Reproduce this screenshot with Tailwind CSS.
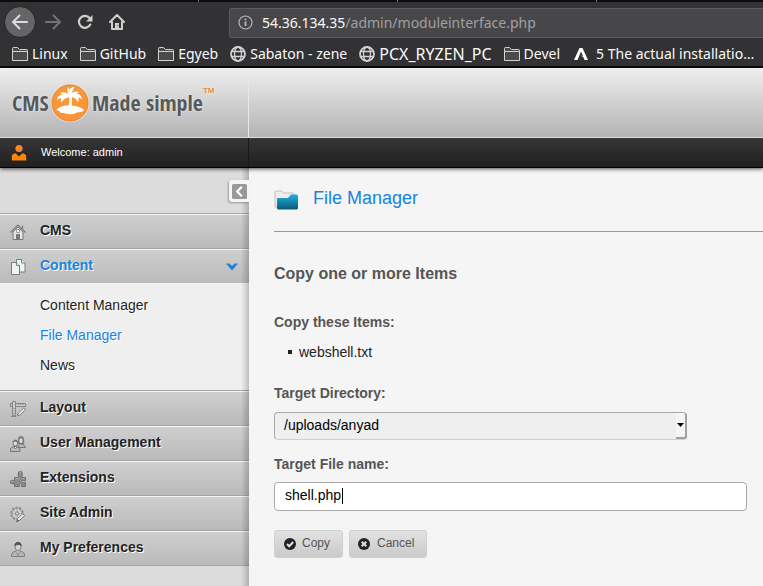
<!DOCTYPE html>
<html lang="en">
<head>
<meta charset="utf-8">
<meta name="viewport" content="width=device-width, initial-scale=1">
<title>File Manager - CMS Made Simple</title>
<script src="https://cdn.jsdelivr.net/npm/@tailwindcss/browser@4"></script>
</head>
<body class="flex min-h-screen flex-col overflow-x-hidden bg-[#f5f5f5] font-['Liberation_Sans',Arial,sans-serif] text-sm text-[#232323]">

<!-- Browser chrome -->
<div class="border-b-2 border-[#0c0c0d] bg-[#323234] font-['Noto_Sans',sans-serif] text-[#f9f9fa]">
  <div class="flex h-[2px] bg-[#0c0c0d]"><div class="ml-[198px] w-px bg-[#77777a]"></div><div class="ml-[198px] w-px bg-[#77777a]"></div><div class="ml-[198px] w-px bg-[#77777a]"></div></div>
  <div class="flex h-10 items-center">
    <button aria-label="Back" class="ml-1 grid size-8 shrink-0 place-items-center rounded-full border border-[#252526] bg-[#656567]">
      <svg class="size-4" viewBox="0 0 16 16" fill="none" stroke="#dcdcdd" stroke-width="2" stroke-linecap="round" stroke-linejoin="round"><path d="M15 8H1.500M7.500 1.500 1 8l6.500 6.500"/></svg>
    </button>
    <button aria-label="Forward" class="ml-[9px] grid size-4 shrink-0 place-items-center">
      <svg class="size-4" viewBox="0 0 16 16" fill="none" stroke="#737375" stroke-width="2" stroke-linecap="round" stroke-linejoin="round"><path d="M1 8h13.500M8.500 1.500 15 8l-6.500 6.500"/></svg>
    </button>
    <button aria-label="Reload" class="ml-4 grid size-4 shrink-0 place-items-center">
      <svg class="size-4" viewBox="0 0 16 16" fill="none" stroke="#cfcfd0" stroke-width="2.200" stroke-linecap="round"><path d="M13.300 10.600A6 6 0 1 1 12.600 4"/><path d="M15.500 1v6.500H9z" fill="#cfcfd0" stroke="none"/></svg>
    </button>
    <button aria-label="Home" class="ml-4 grid size-4 shrink-0 place-items-center">
      <svg class="size-4" viewBox="0 0 16 16" fill="none" stroke="#cfcfd0" stroke-width="2" stroke-linejoin="round" stroke-linecap="round"><path d="M1 8 8 1l7 7M3 8v7h10V8"/><path d="M6 15V9h4v6z" fill="#cfcfd0" stroke="none"/><path d="M9 11.500h.1" stroke="#323234" stroke-width="1"/></svg>
    </button>
    <div class="ml-[104px] mt-px flex h-[30px] min-w-0 flex-1 items-center rounded-l-[3px] border border-r-0 border-[#5c5c5e] bg-[#474749] pl-2">
      <svg class="size-[15px] shrink-0" viewBox="0 0 15 15" fill="none" stroke="#b9b9ba"><circle cx="7.500" cy="7.500" r="6.500" stroke-width="1.200"/><path d="M7.500 6.500V11" stroke-width="1.800"/><path d="M7.500 3.500v1.800" stroke-width="1.800"/></svg>
      <div class="ml-[9px] truncate text-[14px] text-[#a0a0a2]"><span class="text-[#f9f9fa]">54.36.134.35</span>/admin/moduleinterface.php</div>
    </div>
  </div>
  <nav aria-label="Bookmarks" class="flex h-6 items-center gap-3 overflow-hidden whitespace-nowrap pl-3 text-[14px]">
    <a href="#" class="flex shrink-0 items-center gap-1"><svg class="h-[14px] w-4" viewBox="0 0 16 14" fill="#4a4a4b" stroke="#d2d2d3"><path d="M.500 13.500V1.500q0-1 1-1h4l2 2h7q1 0 1 1v10zM.500 4.500h15"/></svg>Linux</a>
    <a href="#" class="flex shrink-0 items-center gap-1"><svg class="h-[14px] w-4" viewBox="0 0 16 14" fill="#4a4a4b" stroke="#d2d2d3"><path d="M.500 13.500V1.500q0-1 1-1h4l2 2h7q1 0 1 1v10zM.500 4.500h15"/></svg>GitHub</a>
    <a href="#" class="flex shrink-0 items-center gap-1"><svg class="h-[14px] w-4" viewBox="0 0 16 14" fill="#4a4a4b" stroke="#d2d2d3"><path d="M.500 13.500V1.500q0-1 1-1h4l2 2h7q1 0 1 1v10zM.500 4.500h15"/></svg>Egyeb</a>
    <a href="#" class="flex shrink-0 items-center gap-1"><svg class="size-4" viewBox="0 0 16 16" fill="none" stroke="#d2d2d3" stroke-width="1.300"><circle cx="8" cy="8" r="7" stroke-width="1.800"/><ellipse cx="8" cy="8" rx="3.500" ry="7"/><path d="M1 5.500h14M1 10.500h14"/></svg>Sabaton - zene</a>
    <a href="#" class="flex shrink-0 items-center gap-1 text-base leading-5"><svg class="size-4" viewBox="0 0 16 16" fill="none" stroke="#d2d2d3" stroke-width="1.300"><circle cx="8" cy="8" r="7" stroke-width="1.800"/><ellipse cx="8" cy="8" rx="3.500" ry="7"/><path d="M1 5.500h14M1 10.500h14"/></svg>PCX_RYZEN_PC</a>
    <a href="#" class="flex shrink-0 items-center gap-1"><svg class="h-[14px] w-4" viewBox="0 0 16 14" fill="#4a4a4b" stroke="#d2d2d3"><path d="M.500 13.500V1.500q0-1 1-1h4l2 2h7q1 0 1 1v10zM.500 4.500h15"/></svg>Devel</a>
    <a href="#" class="flex shrink-0 items-center gap-2 pl-[2px]"><svg class="h-3 w-[14px]" viewBox="0 0 14 12" fill="#fff"><path d="M5.500 0h3L14 12h-3.500L9.300 9 6.500 7.500 9 8 7 3.500 3.500 12H0z"/></svg>5 The actual installatio…</a>
  </nav>
</div>

<!-- Page header -->
<header class="relative z-10 shadow-[0_1px_4px_rgba(0,0,0,0.7)]">
  <div class="flex h-[70px] border-b border-[#dedede] bg-linear-to-b from-[#efefef] to-[#b4b4b4]">
    <a href="#" aria-label="CMS Made Simple" class="flex w-[249px] shrink-0 items-center border-r border-[#e8e8e8] pl-3 font-['Open_Sans_Condensed','Roboto_Condensed',sans-serif] font-bold whitespace-nowrap text-[#58595b] [text-shadow:0_0_2px_#fff]">
      <span class="w-[38px] text-[22px]">CMS</span>
      <svg class="size-10 shrink-0" viewBox="0 0 40 40"><circle cx="20" cy="20" r="19.300" fill="#e9e2da"/><circle cx="20" cy="20" r="18" fill="#f7973a" stroke="#e7812b"/><g fill="#fff"><path d="M6.500 26.500c3-3 8-4.200 12.300-4.200.5-3.600.7-6.300.2-9.300l2.600-.4c.6 3.200.4 6.500.3 9.800 5 .2 9.500 2 12.300 4.600-1.500 2-4.500 2.300-7.500 2.500-2.500 2-9 2.300-12.500.5-2.300.4-5-.2-4.500-1.700-1.300-.2-2.500-.8-3.200-1.800z"/><path d="M20 13c-2.500-3.500-7-5-10.500-2.500 2-.2 2.800.2 3.500.7-3 .3-6 2.600-6 6.300 1.500-2 3-2.500 4.200-2.600-.5 1.500-.4 3 .3 4.600C13 16.500 16 14.500 20 14z"/><path d="M19.500 13c-2-3-3-6.500-1.500-9 .5 1.400 1 2 1.600 2.500 1-2 3-2.800 5-2.500-1.500 2-2.600 5-3.300 9z"/><path d="M20 12.500c2-3.500 6-5.300 9.500-3-1.600 0-2.400.4-3 1 3.500.3 5.500 3 5.200 6.300-1-1.500-2-2.200-3.200-2.300.5 2 .2 3.500-.8 5-.7-3.500-3-5.300-7.200-5.800z"/></g></svg>
      <span class="ml-[2px] text-[22px]">Made simple</span>
      <sup class="-top-3 font-['Liberation_Sans',sans-serif] text-[8px] text-[#e38a3c]">TM</sup>
    </a>
  </div>
  <div class="flex h-[30px] border-b border-black bg-linear-to-b from-[#363636] to-[#202020]">
    <div class="flex w-[249px] shrink-0 items-center border-r border-[#191919] pl-[11px] text-[11px] text-white">
      <svg class="h-[18px] w-4" viewBox="0 0 16 18"><circle cx="8" cy="4.500" r="3.600" fill="#f58a2c"/><path d="M.800 16.500V12.500Q1 9.800 4.500 9.300L8 12.500l3.500-3.200q3.500.5 3.700 3.200v4z" fill="#ff8408"/></svg>
      <span class="ml-[14px]">Welcome: admin</span>
    </div>
  </div>
</header>

<div class="flex flex-1">
  <!-- Sidebar -->
  <aside class="relative w-[249px] shrink-0 bg-[#dcdcdc]">
    <div class="flex h-[46px] justify-end border-b border-[#a5a5a5] pt-3">
      <button aria-label="Collapse menu" class="relative z-10 grid h-[22px] w-5 place-items-center rounded-l-[3px] bg-[#f5f5f5] shadow-[-1px_1px_2px_rgba(0,0,0,0.3)]">
        <svg class="size-[15px]" viewBox="0 0 15 15"><rect width="15" height="15" rx="1.500" fill="#999"/><path d="M9.800 2.800 5.200 7.500l4.600 4.700" fill="none" stroke="#fff" stroke-width="2.200"/></svg>
      </button>
    </div>
    <nav aria-label="Main menu" class="font-bold [text-shadow:1px_1px_0_#fff]">
      <a href="#" class="flex h-[35px] items-center border-t border-b border-t-[#f5f5f5] border-b-[#a5a5a5] bg-linear-to-b from-[#cfcfcf] to-[#bababa] pl-[10px] pb-[3px]">
        <svg class="mt-1 size-4" viewBox="0 0 16 16" fill="none" stroke="#777"><path d="M3 8v7.500h10V8L8 3z" fill="#e4e4e4"/><path d="M.500 8.500 8 1l7.500 7.500M12.500 5V1.500" stroke-width="1.200"/><path d="M6.500 15.500v-5h3v5z" fill="#777"/><path d="M6.500 5.500h3v3h-3z" fill="#fff" stroke="#999"/></svg>
        <span class="ml-[14px]">CMS</span>
      </a>
      <a href="#" class="flex h-[34px] items-center border-t border-[#f5f5f5] bg-linear-to-b from-[#cfcfcf] to-[#bababa] pl-[10px] pb-1 text-[#1983de]">
        <svg class="mt-1 size-4" viewBox="0 0 16 16" stroke="#72807e" fill="#edf4f3"><path d="M6.500.500h5l3.500 3.500v9H6.500z"/><path d="M11.500.500V4H15" fill="#fff"/><path d="M1.500 3.500h5l3 3v9h-8z"/><path d="M6.500 3.500v3h3" fill="#fff"/></svg>
        <span class="ml-[14px] flex-1">Content</span>
        <svg class="mt-1 mr-[11px] h-2 w-3" viewBox="0 0 12 8" fill="#1983de"><path d="M0 .500h3.500L6 3l2.500-2.500H12L6 7.500z"/></svg>
      </a>
      <div class="flex h-[108px] flex-col border-b border-[#a5a5a5] bg-[#efefef] pt-[7px] pl-10 font-normal leading-[30px]">
        <a href="#">Content Manager</a>
        <a href="#" class="text-[#1983de]">File Manager</a>
        <a href="#">News</a>
      </div>
      <a href="#" class="flex h-[35px] items-center border-t border-b border-t-[#f5f5f5] border-b-[#a5a5a5] bg-linear-to-b from-[#cfcfcf] to-[#bababa] pl-[10px] pb-[3px]">
        <svg class="mt-1 size-4" viewBox="0 0 16 16" fill="#ccc" stroke="#858585"><path d="M.500 2.500h15v3H.500z"/><path d="M2.500.500h3v14h-3z"/><path d="M8 3v1M10.500 3v1M13 3v1M3.500 7.500h1M3.500 10h1M3.500 12.500h1M1 15.500h5"/><path d="m7.500 15 .8-3 5.500-5 1.700 1.500-5.500 5.500z" fill="#eee" stroke="#777"/></svg>
        <span class="ml-[14px]">Layout</span>
      </a>
      <a href="#" class="flex h-[35px] items-center border-t border-b border-t-[#f5f5f5] border-b-[#a5a5a5] bg-linear-to-b from-[#cfcfcf] to-[#bababa] pl-[10px] pb-[3px]">
        <svg class="mt-1 size-4" viewBox="0 0 16 16" fill="#bbb" stroke="#777"><path d="M8 11.500q0-2.500 2.500-3.500h1.500q3 1 3.500 3.500z"/><path d="M8.300 7.500V3.500q0-3 2.700-3t2.700 3v4z" fill="#888"/><ellipse cx="11" cy="4.800" rx="1.500" ry="2.300" fill="#ddd" stroke="none"/><path d="M.500 15.500V13q.5-1.500 3.500-2.500h2.500q3 1 3.500 2.500v2.500z"/><ellipse cx="5.300" cy="7" rx="2.300" ry="3" fill="#ddd"/><path d="M3 6q2-2.500 4.600 0" stroke-width="1.600"/><path d="m4 11 1.300 2L7 11" fill="#fff"/></svg>
        <span class="ml-[14px]">User Management</span>
      </a>
      <a href="#" class="flex h-[35px] items-center border-t border-b border-t-[#f5f5f5] border-b-[#a5a5a5] bg-linear-to-b from-[#cfcfcf] to-[#bababa] pl-[10px] pb-[3px]">
        <svg class="mt-1 size-4" viewBox="0 0 16 16" fill="#8c8c8c" stroke="#6f6f6f"><path d="M4.500 15.500v-3.200q-2.500 1.200-4-.3v-2q1.500-1.500 4-.2V6.500h4.300Q7.500 3 8.800.800h3Q13 3 11.800 6.500h3.700v3.200q-3.300-1.200-3.500.8.300 2 3.500 1v4h-4q1-3-1-3t-1.200 3z"/><path d="M5.500 7.500h4M9.500 1.500h1.500M1.500 10.500h2M12.500 7.500h2" stroke="#b5b5b5"/></svg>
        <span class="ml-[14px]">Extensions</span>
      </a>
      <a href="#" class="flex h-[35px] items-center border-t border-b border-t-[#f5f5f5] border-b-[#a5a5a5] bg-linear-to-b from-[#cfcfcf] to-[#bababa] pl-[10px] pb-[3px]">
        <svg class="mt-1 size-4" viewBox="0 0 16 16" fill="none" stroke="#858585"><circle cx="7" cy="7.500" r="6" stroke-width="1.500" stroke-dasharray="2.400 1.300"/><circle cx="7" cy="7.500" r="4.800" fill="#ddd" stroke="#999"/><path d="M7 3v9M2.500 7.500h9M4 4.500l6 6M10 4.500l-6 6" stroke="#aaa"/><circle cx="7" cy="7.500" r="1.700" fill="#ccc"/><path d="m7 15.300.7-3 5-4.500 2 1.700-4.900 4.700z" fill="#eee" stroke="#777"/><path d="m6.500 15.500 2-1" stroke="#333"/></svg>
        <span class="ml-[14px]">Site Admin</span>
      </a>
      <a href="#" class="flex h-[35px] items-center border-t border-b border-t-[#f5f5f5] border-b-[#a5a5a5] bg-linear-to-b from-[#cfcfcf] to-[#bababa] pl-[10px] pb-[3px]">
        <svg class="mt-1 size-4" viewBox="0 0 16 16" fill="#b5b5b5" stroke="#808080"><path d="M1.500 15.500V13q.5-2 4.500-3h4q4 1 4.500 3v2.500z"/><ellipse cx="8" cy="5.500" rx="3" ry="4" fill="#d5d5d5"/><path d="M5 5V3q3-3.500 6 0v2L9.500 3.500H7z" fill="#555" stroke="#555"/><path d="M6 10.500 8 13l2-2.500M8 13v2" fill="#eee"/></svg>
        <span class="ml-[14px]">My Preferences</span>
      </a>
    </nav>
    <div class="pointer-events-none absolute inset-y-0 right-0 w-2 bg-linear-to-r from-black/0 to-black/20"></div>
  </aside>

  <!-- Content -->
  <main class="min-w-0 flex-1 pl-[25px]">
    <div class="flex h-16 items-center border-b border-[#f58220] pb-1">
      <svg class="mt-1 h-5 w-6 shrink-0" viewBox="0 0 24 20"><defs><linearGradient id="folder" x2="0" y2="1"><stop stop-color="#20b1df"/><stop offset="1" stop-color="#095a7a"/></linearGradient></defs><path d="M1 17V2.500Q1 1 2.500 1h5L9.500 3h9Q20 3 20 4.500V17z" fill="#eee" stroke="#bdbdbd"/><path d="M3 9Q3 8 4 8h10l3-3.500h5.500Q24 4.500 24 6v12q0 1.500-1.500 1.500h-18Q3 19.500 3 18z" fill="url(#folder)"/></svg>
      <h1 class="ml-[15px] text-lg leading-6 text-[#1983de]">File Manager</h1>
    </div>
    <form class="pt-8 pr-4 text-[#555]">
      <h2 class="text-base leading-5 font-bold">Copy one or more Items</h2>
      <h3 class="mt-7 leading-5 font-bold">Copy these Items:</h3>
      <ul class="mt-[10px] text-[#232323]">
        <li class="flex items-center leading-5"><span class="mx-[14px] mr-[7px] size-1 bg-[#232323]"></span>webshell.txt</li>
      </ul>
      <label for="dir" class="mt-[21px] block leading-5 font-bold">Target Directory:</label>
      <div class="relative mt-[9px] w-[413px] max-w-full">
        <select id="dir" class="block h-7 w-full appearance-none rounded-[4px] border border-[#a9a9a9] border-r-[#a0a0a0] border-b-[#d0d0d0] bg-[#efefef] pb-[2px] pl-[9px] text-black"><option>/uploads/anyad</option></select>
        <span class="pointer-events-none absolute top-px right-0 bottom-px grid w-[11px] place-items-center rounded-r-[3px] border-r-2 border-b-2 border-[#a0a0a0] bg-[#f5f5f5]"><svg class="h-1 w-[7px]" viewBox="0 0 7 4"><path d="M0 0h7L3.500 4z"/></svg></span>
      </div>
      <label for="name" class="mt-[14px] block leading-5 font-bold">Target File name:</label>
      <div class="relative mt-2">
        <input id="name" type="text" value="shell.php" class="block h-[29px] w-full rounded-[4px] border border-[#a9a9a9] bg-white px-[10px] pb-[3px] text-black">
        <span class="pointer-events-none absolute top-[6px] left-[68px] h-4 w-px bg-black"></span>
      </div>
      <div class="mt-[19px] flex gap-[6px] text-xs">
        <button type="button" class="flex h-7 items-center rounded-[3px] border border-[#d0d0d0] bg-linear-to-b from-[#e2e2e2] to-[#cacaca] pr-3 pb-[2px] pl-[9px]"><svg class="mt-[2px] mr-[6px] size-3" viewBox="0 0 12 12"><circle cx="6" cy="6" r="6" fill="#232323"/><path d="m3 6 2.200 2.200L9.200 4" fill="none" stroke="#e2e2e2" stroke-width="2"/></svg>Copy</button>
        <button type="button" class="flex h-7 items-center rounded-[3px] border border-[#d0d0d0] bg-linear-to-b from-[#e2e2e2] to-[#cacaca] pr-3 pb-[2px] pl-2"><svg class="mt-[2px] mr-[7px] size-3" viewBox="0 0 12 12"><circle cx="6" cy="6" r="6" fill="#232323"/><path d="m3.700 3.700 4.600 4.600m0-4.600L3.700 8.300" stroke="#e2e2e2" stroke-width="2"/></svg>Cancel</button>
      </div>
    </form>
  </main>
</div>
</body>
</html>
